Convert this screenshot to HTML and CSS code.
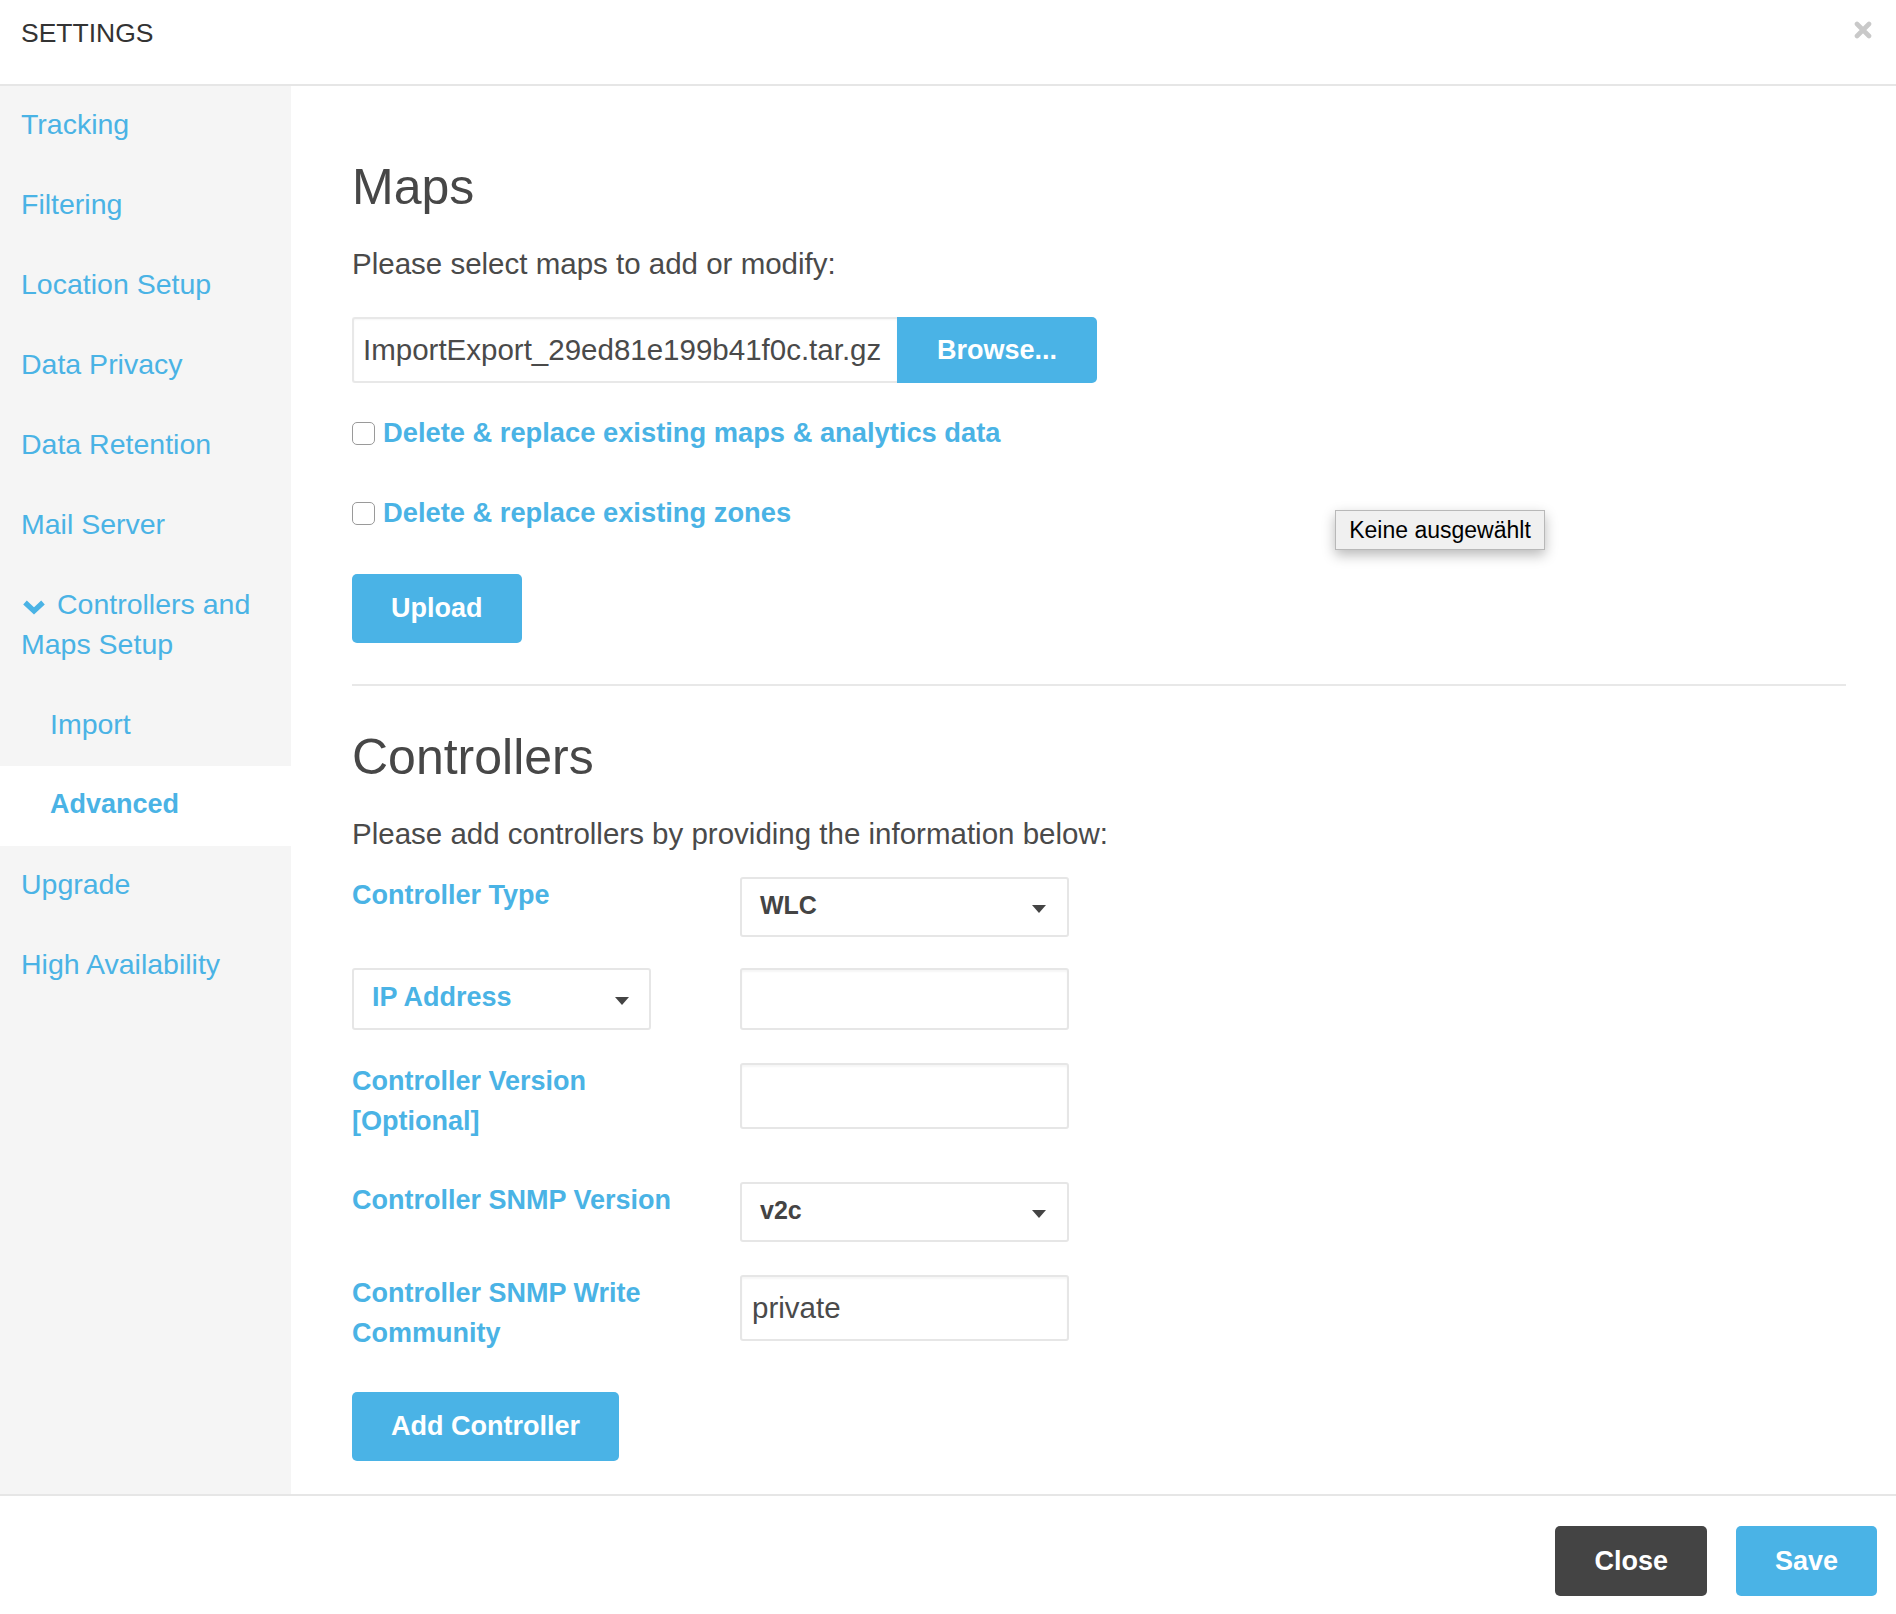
FILE: index.html
```html
<!DOCTYPE html>
<html lang="en">
<head>
<meta charset="utf-8">
<title>Settings</title>
<link rel="stylesheet" href="styles.css">
</head>
<body>
<div class="modal">
  <header class="modal-header">
    <h1 class="title">SETTINGS</h1>
    <button class="close-x" aria-label="Close">
      <svg viewBox="0 0 18 18" width="18" height="18"><path d="M3 3 L15 15 M15 3 L3 15" stroke="#c9c9c9" stroke-width="4.6" stroke-linecap="round" fill="none"/></svg>
    </button>
  </header>
  <div class="modal-body">
    <nav class="sidebar">
      <a class="nav-item">Tracking</a>
      <a class="nav-item">Filtering</a>
      <a class="nav-item">Location Setup</a>
      <a class="nav-item">Data Privacy</a>
      <a class="nav-item">Data Retention</a>
      <a class="nav-item">Mail Server</a>
      <a class="nav-item"><svg class="chev" viewBox="0 0 24 16" width="24" height="16"><polyline points="3,3.5 12,12 21,3.5" fill="none" stroke="#4ab3e5" stroke-width="5.2" stroke-linejoin="miter"/></svg>Controllers and Maps Setup</a>
      <a class="nav-item nav-sub">Import</a>
      <a class="nav-item nav-sub active">Advanced</a>
      <a class="nav-item">Upgrade</a>
      <a class="nav-item">High Availability</a>
    </nav>
    <main class="content">
      <h2 class="heading">Maps</h2>
      <p class="lead">Please select maps to add or modify:</p>
      <div class="file-group">
        <div class="file-name">ImportExport_29ed81e199b41f0c.tar.gz</div>
        <button class="btn btn-attached">Browse...</button>
      </div>
      <label class="check"><span class="box"></span>Delete &amp; replace existing maps &amp; analytics data</label>
      <label class="check check-second"><span class="box"></span>Delete &amp; replace existing zones</label>
      <div class="actions-upload"><button class="btn">Upload</button></div>
      <div class="tooltip">Keine ausgewählt</div>

      <hr class="divider">

      <h2 class="heading heading-ctrl">Controllers</h2>
      <p class="lead">Please add controllers by providing the information below:</p>

      <div class="form">
        <div class="form-row">
          <label class="form-label">Controller Type</label>
          <div class="select offset"><span>WLC</span><span class="caret"></span></div>
        </div>
        <div class="form-row">
          <div class="select select-ip"><span>IP Address</span><span class="caret"></span></div>
          <div class="input input-62"></div>
        </div>
        <div class="form-row">
          <label class="form-label">Controller Version<br>[Optional]</label>
          <div class="input offset"></div>
        </div>
        <div class="form-row">
          <label class="form-label">Controller SNMP Version</label>
          <div class="select offset"><span>v2c</span><span class="caret"></span></div>
        </div>
        <div class="form-row">
          <label class="form-label">Controller SNMP Write<br>Community</label>
          <div class="input offset"><span>private</span></div>
        </div>
        <div><button class="btn">Add Controller</button></div>
      </div>
    </main>
  </div>
  <footer class="modal-footer">
    <button class="btn btn-dark">Close</button>
    <button class="btn">Save</button>
  </footer>
</div>
</body>
</html>
```
FILE: styles.css
```css
html, body {
  margin: 0;
  padding: 0;
  background: #ffffff;
}

body {
  font-family: "Liberation Sans", Arial, Helvetica, sans-serif;
  color: #4a4a4a;
}

.modal {
  width: 1896px;
  height: 1614px;
  display: flex;
  flex-direction: column;
  overflow: hidden;
}

/* Header */
.modal-header {
  height: 84px;
  flex-shrink: 0;
  border-bottom: 2px solid #e6e6e6;
  display: flex;
  justify-content: space-between;
  align-items: flex-start;
  padding: 0 24px 0 21px;
}

.title {
  margin: 18px 0 0;
  font-size: 26.5px;
  line-height: 30px;
  font-weight: normal;
  color: #333333;
}

.close-x {
  margin-top: 21px;
  padding: 0;
  border: none;
  background: none;
  width: 18px;
  height: 18px;
  display: block;
}

.close-x svg {
  display: block;
}

/* Body */
.modal-body {
  height: 1408px;
  flex-shrink: 0;
  display: flex;
}

.sidebar {
  width: 291px;
  flex-shrink: 0;
  background: #f5f5f5;
  display: flex;
  flex-direction: column;
}

.nav-item {
  display: block;
  padding: 18px 20px 22px 21px;
  line-height: 40px;
  font-size: 28.5px;
  color: #4ab3e5;
  text-decoration: none;
}

.chev {
  display: inline-block;
  vertical-align: -1px;
  margin: 0 11px 0 1px;
}

.nav-sub {
  padding-left: 50px;
}

.nav-sub.active {
  background: #ffffff;
  font-weight: bold;
  font-size: 27px;
}

/* Content */
.content {
  flex: 1;
  position: relative;
  padding: 71px 50px 0 61px;
}

.heading {
  margin: 0;
  font-size: 50px;
  line-height: 60px;
  font-weight: normal;
  color: #474747;
}

.heading-ctrl {
  margin-top: 41px;
}

.lead {
  margin: 27px 0 0;
  font-size: 29.5px;
  line-height: 40px;
  color: #4a4a4a;
}

.file-group {
  margin-top: 33px;
  display: flex;
  height: 66px;
}

.file-name {
  width: 545px;
  box-sizing: border-box;
  border: 2px solid #e8e8e8;
  border-right: none;
  border-radius: 3px 0 0 3px;
  padding: 0 9px;
  display: flex;
  align-items: center;
  font-size: 29.5px;
  color: #4a4a4a;
  box-shadow: inset 0 1px 2px rgba(0, 0, 0, 0.04);
}

.btn {
  font-family: "Liberation Sans", Arial, Helvetica, sans-serif;
  font-weight: bold;
  font-size: 27px;
  color: #ffffff;
  background: #4ab3e6;
  border: none;
  border-radius: 5px;
  padding: 0 39px;
  height: 69px;
  cursor: pointer;
}

.btn-attached {
  height: 66px;
  width: 200px;
  padding: 0;
  border-radius: 0 5px 5px 0;
}

.btn-dark {
  background: #444444;
}

.check {
  display: flex;
  align-items: center;
  gap: 8px;
  margin-top: 30px;
  font-weight: bold;
  font-size: 27.3px;
  line-height: 40px;
  color: #4ab3e5;
}

.check-second {
  margin-top: 40px;
}

.box {
  width: 23px;
  height: 23px;
  box-sizing: border-box;
  border: 1.5px solid #9a9a9a;
  border-radius: 5px;
  background: #ffffff;
  flex-shrink: 0;
}

.actions-upload {
  margin-top: 41px;
}

.tooltip {
  position: absolute;
  left: 1044px;
  top: 424px;
  width: 210px;
  height: 40px;
  box-sizing: border-box;
  background: #f0f0f0;
  border: 1px solid #b8b8b8;
  box-shadow: 0 5px 12px rgba(0, 0, 0, 0.28);
  font-size: 23px;
  line-height: 38px;
  text-align: center;
  color: #000000;
}

.divider {
  margin: 41px 0 0;
  border: 0;
  border-top: 2px solid #e8e8e8;
}

/* Controllers form */
.form {
  margin-top: 21px;
}

.form-row {
  display: grid;
  grid-template-columns: 388px 329px;
  align-items: start;
  margin-bottom: 31px;
}

.form-label {
  font-weight: bold;
  font-size: 27px;
  line-height: 40px;
  padding-bottom: 8px;
  color: #4ab3e5;
}

.offset {
  margin-top: 2px;
}

.select {
  display: flex;
  align-items: center;
  justify-content: space-between;
  box-sizing: border-box;
  height: 60px;
  border: 2px solid #e6e6e6;
  border-radius: 3px;
  padding: 0 21px 0 18px;
  font-weight: bold;
  font-size: 25px;
  color: #444444;
  background: #ffffff;
}

.select > span:first-child {
  margin-top: -4px;
}

.select-ip {
  width: 299px;
  height: 62px;
  padding: 0 20px 0 18px;
  font-size: 27px;
  color: #4ab3e5;
}

.caret {
  width: 0;
  height: 0;
  border-left: 7px solid transparent;
  border-right: 7px solid transparent;
  border-top: 8px solid #444444;
  margin-top: 3px;
}

.input {
  box-sizing: border-box;
  height: 66px;
  border: 2px solid #e6e6e6;
  border-radius: 3px;
  padding: 0 10px;
  display: flex;
  align-items: center;
  font-size: 29.5px;
  color: #4a4a4a;
  box-shadow: inset 0 2px 2px rgba(0, 0, 0, 0.04);
}

.input-62 {
  height: 62px;
}

/* Footer */
.modal-footer {
  flex: 1;
  border-top: 2px solid #e6e6e6;
  display: flex;
  justify-content: flex-end;
  align-items: flex-start;
  gap: 29px;
  padding: 30px 19px 0;
}

.modal-footer .btn {
  height: 70px;
}
```
